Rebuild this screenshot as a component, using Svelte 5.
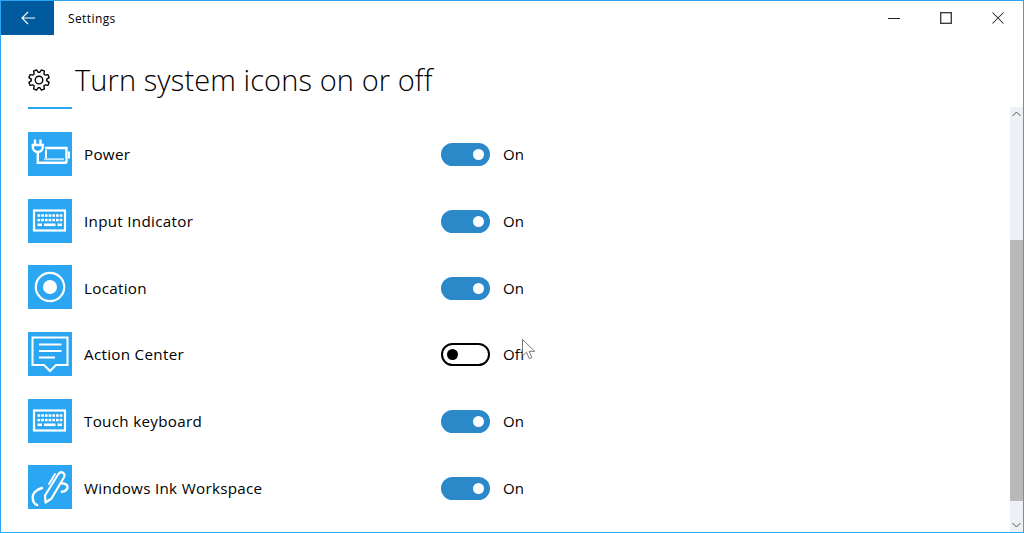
<script lang="ts">
	type Row = { name: string; icon: string; on: boolean };

	const rows: Row[] = [
		{ name: 'Power', icon: 'power', on: true },
		{ name: 'Input Indicator', icon: 'keyboard', on: true },
		{ name: 'Location', icon: 'location', on: true },
		{ name: 'Action Center', icon: 'action', on: false },
		{ name: 'Touch keyboard', icon: 'keyboard', on: true },
		{ name: 'Windows Ink Workspace', icon: 'ink', on: true }
	];

	// 8-tooth cog outline
	function gearPath(cx: number, cy: number, outer: number, inner: number, teeth: number) {
		const pts: string[] = [];
		const step = (Math.PI * 2) / teeth;
		for (let i = 0; i < teeth; i++) {
			const a = i * step + step / 2;
			const list: [number, number][] = [
				[inner, a - step * 0.36],
				[outer, a - step * 0.2],
				[outer, a + step * 0.2],
				[inner, a + step * 0.36]
			];
			for (const [r, t] of list) {
				pts.push(`${(cx + r * Math.cos(t)).toFixed(2)} ${(cy + r * Math.sin(t)).toFixed(2)}`);
			}
		}
		return 'M' + pts.join('L') + 'Z';
	}

	const keyDots = [0, 1, 2, 3, 4, 5, 6];
</script>

<div class="window">
	<div class="titlebar">
		<button class="back" aria-label="Back">
			<svg width="16" height="16" viewBox="0 0 16 16" fill="none" stroke="#fff" stroke-width="1.1">
				<path d="M15 8H2M8 2L2 8l6 6" />
			</svg>
		</button>
		<span class="app-title">Settings</span>
		<div class="controls">
			<svg class="ctl" width="12" height="12" viewBox="0 0 12 12" fill="none" stroke="#222">
				<path d="M0 6.5h12" />
			</svg>
			<svg class="ctl" width="12" height="12" viewBox="0 0 12 12" fill="none" stroke="#333" stroke-width="1.3">
				<rect x="0.7" y="0.7" width="10.6" height="10.6" />
			</svg>
			<svg class="ctl" width="12" height="12" viewBox="0 0 12 12" fill="none" stroke="#222" stroke-width="1.05">
				<path d="M.5.5l11 11M11.5.5l-11 11" />
			</svg>
		</div>
	</div>

	<header class="page-head">
		<div class="gear-tab">
			<svg width="22" height="22" viewBox="0 0 22 22" fill="none" stroke="#000" stroke-width="1.35">
				<path d={gearPath(11, 11, 10.4, 7.8, 8)} stroke-linejoin="round" />
				<circle cx="11" cy="11" r="3.8" />
			</svg>
		</div>
		<h1>Turn system icons on or off</h1>
	</header>

	<ul class="list">
		{#each rows as row}
			<li class="row">
				<div class="label-wrap">
					<span class="tile">
						<svg width="44" height="44" viewBox="0 0 44 44" fill="none" stroke="#fff" stroke-width="2">
							{#if row.icon === 'power'}
								<path d="M7 7.500v5.500M12.500 7.500v5.500" stroke-width="2.400" />
								<path d="M4.800 13h10v2a5 5 0 0 1-10 0zM9.800 20v10.800h29" stroke-width="2.400" />
								<path d="M17 16h21.500v14.800" stroke-width="2.400" />
								<path d="M18 18v8" stroke-width="2" />
								<path d="M16 27.200h20" stroke-width="2" opacity="0.7" />
								<path d="M41 19.500v7" stroke-width="2" />
							{:else if row.icon === 'keyboard'}
								<rect x="6" y="11.500" width="31" height="20" stroke-width="2.200" />
								{#each keyDots as i}
									<rect x={9.500 + i * 3.7} y="15.300" width="2.700" height="2.500" fill="#fff" stroke="none" />
									<rect x={9.500 + i * 3.7} y="19.800" width="2.700" height="2.500" fill="#fff" stroke="none" />
								{/each}
								<rect x="9.500" y="24.500" width="4.500" height="2.600" fill="#fff" stroke="none" />
								<rect x="16" y="24.500" width="11.500" height="2.600" fill="#fff" stroke="none" />
								<rect x="29.500" y="24.500" width="4.500" height="2.600" fill="#fff" stroke="none" />
							{:else if row.icon === 'location'}
								<circle cx="22" cy="22" r="14.200" stroke-width="2.200" />
								<circle cx="22" cy="22" r="7" fill="#fff" stroke="none" />
							{:else if row.icon === 'action'}
								<path d="M4.500 5.500h35V33H28l-6 6-6-6H4.500z" stroke-width="2" />
								<path d="M11 12.500h22.500M11 19h22.500M11 25.500h16" stroke-width="2" />
							{:else}
								<path d="M17.500 37.500L17 30.500 30 9.500c1.300-2 3.300-2.700 5-1.700s1.800 3 .7 5L23.500 33.500z" stroke-width="2.200" stroke-linejoin="round" />
								<path d="M27 9l-6 10" stroke-width="1.800" stroke-linecap="round" />
								<path d="M14 23c-5 1.500-9.500 5-9.300 9.500.2 4 2 7 4.500 7.500" stroke-width="2.400" stroke-linecap="round" />
								<path d="M33.700 18.300c3.500 0 6.300 2 5.800 4.200-.5 2.500-3 4-5.800 4.200" stroke-width="2.400" stroke-linecap="round" />
							{/if}
						</svg>
					</span>
					<span class="name">{row.name}</span>
				</div>
				<span class="toggle" class:on={row.on}><span class="knob"></span></span>
				<span class="state">{row.on ? 'On' : 'Off'}</span>
			</li>
		{/each}
	</ul>

	<div class="scrollbar">
		<span class="arrow">
			<svg width="9" height="6" viewBox="0 0 9 6" fill="none" stroke="#555"><path d="M.5 5L4.500 1l4 4" /></svg>
		</span>
		<div class="track">
			<div class="thumb"></div>
		</div>
		<span class="arrow">
			<svg width="9" height="6" viewBox="0 0 9 6" fill="none" stroke="#555"><path d="M.5 1l4 4 4-4" /></svg>
		</span>
	</div>

	<svg class="cursor" width="15" height="22" viewBox="0 0 15 22">
		<path d="M.5.5v16.500l4-3.800 2.800 6.500 2.600-1.100-2.800-6.300h5.600z" fill="#fff" stroke="#555" stroke-width="0.8" />
	</svg>
</div>

<style>
	:global(body) {
		margin: 0;
		background: #fff;
	}

	.window {
		position: relative;
		box-sizing: border-box;
		width: 1024px;
		height: 533px;
		border: 1px solid #2aa6f2;
		display: flex;
		flex-direction: column;
		overflow: hidden;
		background: #fff;
		font-family: 'Open Sans', 'Noto Sans', sans-serif;
		color: #000;
	}

	.titlebar {
		display: flex;
		align-items: center;
		height: 34px;
		flex-shrink: 0;
	}

	.back {
		display: flex;
		align-items: center;
		justify-content: center;
		width: 53px;
		height: 34px;
		padding: 0;
		border: 0;
		background: #005a9e;
	}

	.app-title {
		margin-left: 14px;
		font-size: 12px;
		letter-spacing: 0.4px;
	}

	.controls {
		display: flex;
		gap: 40px;
		margin-left: auto;
		margin-right: 19px;
	}

	.page-head {
		display: flex;
		align-items: flex-start;
		height: 74px;
		flex-shrink: 0;
		padding-left: 27px;
		box-sizing: border-box;
	}

	.gear-tab {
		box-sizing: border-box;
		width: 44px;
		height: 74px;
		padding-top: 34px;
		border-bottom: 2px solid #2aa6f2;
		line-height: 0;
	}

	h1 {
		margin: 25px 0 0 3px;
		font-size: 29px;
		font-weight: 300;
		line-height: 40px;
		letter-spacing: 0.1px;
	}

	.list {
		list-style: none;
		margin: 0;
		padding: 23px 0 0 27px;
		display: flex;
		flex-direction: column;
		gap: 22.7px;
	}

	.row {
		display: flex;
		align-items: center;
		height: 44px;
	}

	.label-wrap {
		display: flex;
		align-items: center;
		width: 413px;
	}

	.tile {
		width: 44px;
		height: 44px;
		background: #2aa6f2;
		line-height: 0;
	}

	.name {
		margin-left: 12px;
		margin-top: 0.6px;
		font-size: 15.2px;
		letter-spacing: 0.3px;
	}

	.toggle {
		box-sizing: border-box;
		display: flex;
		align-items: center;
		width: 49px;
		height: 23px;
		padding: 0 4px;
		border: 2px solid #000;
		border-radius: 12px;
		margin-top: 1.6px;
	}

	.knob {
		width: 11px;
		height: 11px;
		border-radius: 50%;
		background: #000;
	}

	.toggle.on {
		justify-content: flex-end;
		background: #2b88c9;
		border-color: #2b88c9;
	}

	.toggle.on .knob {
		background: #fff;
	}

	.state {
		margin-left: 13px;
		margin-top: 0.6px;
		font-size: 15px;
		letter-spacing: 0.2px;
	}

	.scrollbar {
		position: absolute;
		top: 106px;
		right: 0;
		bottom: 0;
		width: 13px;
		display: flex;
		flex-direction: column;
		background: #edf0f4;
	}

	.arrow {
		display: flex;
		align-items: center;
		justify-content: center;
		height: 14px;
		flex-shrink: 0;
	}

	.track {
		flex: 1;
		padding-top: 119px;
		padding-bottom: 17px;
		display: flex;
	}

	.thumb {
		flex: 1;
		background: #b9b9b9;
	}

	.cursor {
		position: absolute;
		left: 521px;
		top: 338px;
	}
</style>
